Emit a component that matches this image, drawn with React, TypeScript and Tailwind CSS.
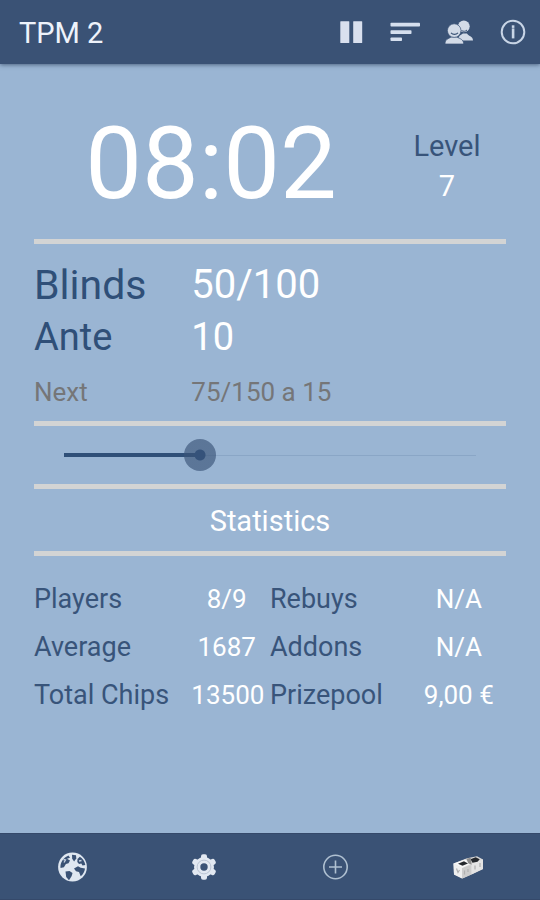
import { type ReactNode, useState } from "react";

type StatRow = {
  label: string;
  value: string;
  secondLabel: string;
  secondValue: string;
};

const stats: StatRow[] = [
  { label: "Players", value: "8/9", secondLabel: "Rebuys", secondValue: "N/A" },
  { label: "Average", value: "1687", secondLabel: "Addons", secondValue: "N/A" },
  { label: "Total Chips", value: "13500", secondLabel: "Prizepool", secondValue: "9,00 €" },
];

const gearAngles = [0, 60, 120, 180, 240, 300];

function PauseIcon() {
  return (
    <svg viewBox="0 0 32 32" className="h-8 w-8" fill="#d9e0ee">
      <rect x="5.3" y="5.3" width="9" height="21.6" rx="0.5" />
      <rect x="18.2" y="5.3" width="9" height="21.6" rx="0.5" />
    </svg>
  );
}

function SortIcon() {
  return (
    <svg viewBox="0 0 32 32" className="h-8 w-8" fill="#d5dfee">
      <rect x="1.5" y="6.8" width="29.5" height="3.8" rx="0.8" />
      <rect x="1.5" y="14.2" width="21" height="3.8" rx="0.8" />
      <rect x="1.5" y="21.5" width="11.5" height="3.6" rx="0.8" />
    </svg>
  );
}

function PlayersIcon() {
  return (
    <svg viewBox="0 0 32 32" className="h-8 w-8" fill="#d3dbe7">
      <circle cx="20.8" cy="10.3" r="5.9" />
      <path d="M15 24.6c0-4 2.500-5.500 5-7h4c1 2.500 6 2.500 6 7z" />
      <g stroke="#3a5275" strokeWidth="0.7">
        <path d="M2 28c.2-4.800 3-5.300 6.500-7h5c3.500 1.700 7 2.200 7.200 7z" />
        <circle cx="11.200" cy="14.600" r="6.800" />
      </g>
      <path d="M8 16.800c1.800 2 5 2 7 0" fill="none" stroke="#3a5275" strokeWidth="1.200" />
      <path d="M18.500 14.500c1.800 1.200 4 1 5.500-.5" fill="none" stroke="#3a5275" strokeWidth="1" />
    </svg>
  );
}

function InfoIcon() {
  return (
    <svg viewBox="0 0 32 32" className="h-8 w-8">
      <circle cx="16" cy="16" r="11.300" fill="none" stroke="#c8d5e6" strokeWidth="2" />
      <rect x="14.800" y="9.300" width="2.600" height="2.600" fill="#c8d5e6" />
      <rect x="14.800" y="12.400" width="2.600" height="10" fill="#c8d5e6" />
    </svg>
  );
}

function GlobeIcon() {
  return (
    <svg viewBox="0 0 32 32" className="h-8 w-8">
      <circle cx="16.500" cy="16" r="14.400" fill="#dfe7f1" />
      <g fill="#3a5275">
        <path d="M16 3.800l4 .5.300 3.200-2.200 3-1.900-2.800z" />
        <path d="M12.500 4.500l1.500 2.300-3 1 3 1.800-1.500 2.600-2.600.8-2 3.200-3.400.8c-.6-5.500 3-10.500 8-12.500z" />
        <path d="M21.500 8l2.300-2.200c3 1.800 5 4.600 5.500 8.200l-2.800.5-1.200-2-2.300.6-1.700-2z" />
        <path d="M9.500 20.500l4-.5 3 2-.8 3-2.700 4.300-2.800-3.300z" />
        <path d="M18 17.500l4-2.300 2.700 1.500 4.300.7c-.4 3.200-1.800 5.800-4.300 7.900l-1.700-4.200-3-.8z" />
      </g>
      <path d="M7.500 8.500l2 .5-1.500 2.500M23 10l2.500-.5" fill="none" stroke="#c6d2e2" strokeWidth="1.300" />
    </svg>
  );
}

function GearIcon() {
  return (
    <svg viewBox="0 0 32 32" className="h-8 w-8">
      <g fill="#e2e8f1">
        {gearAngles.map((angle) => (
          <rect key={angle} x="13" y="3.200" width="6" height="7.500" rx="2" transform={`rotate(${angle} 16 16)`} />
        ))}
        <circle cx="16" cy="16" r="10" />
      </g>
      <circle cx="16" cy="16" r="6.900" fill="none" stroke="#b5bfcf" strokeWidth="0.900" />
      <circle cx="16" cy="16" r="3.700" fill="#3a5275" />
    </svg>
  );
}

function AddIcon() {
  return (
    <svg viewBox="0 0 32 32" className="h-8 w-8" fill="none" stroke="#afc0d1">
      <circle cx="15.500" cy="16" r="11.700" strokeWidth="1.600" />
      <path d="M15.500 9.500v13M9 16h13" strokeWidth="1.600" />
    </svg>
  );
}

function ChipsIcon() {
  return (
    <svg viewBox="0 0 32 32" className="h-8 w-8">
      <path d="M1.500 12.500L15 7.300 25 5.300 31 8.500v9.500L16 25 10.500 27.500 2 23.500z" fill="#d9d9d9" />
      <path d="M1.500 12.500L10 17V27.500l-8-4z" fill="#efefef" />
      <path d="M10 17l9.500-3v9.500L10 27.500z" fill="#cdcdcd" />
      <path d="M19.500 12.500L31 8.500V18l-11.500 5.500z" fill="#e4e4e4" />
      <path d="M1.500 12.500L13 8.500l6.500 4L10 17z" fill="#f7f7f7" />
      <path d="M6 12.700l6-2.400 4 2.200-5.500 2.300z" fill="#25282d" />
      <path d="M18.500 8.200l5.200-2 4 2-2.200 2.500-5 1z" fill="#25282d" />
      <path d="M14.500 7.800l4.200-1 1 7-3.500-1.500z" fill="#8c8c8c" />
      <path d="M4.500 17.500l1.500 4 1.500-2.500M12.500 19.500v4M16 18v3M23 14.500v4M28 12v4" fill="none" stroke="#b0b0b0" strokeWidth="1.200" />
    </svg>
  );
}

function IconButton({ label, className = "", children }: { label: string; className?: string; children: ReactNode }) {
  return (
    <button type="button" aria-label={label} className={`flex items-center justify-center ${className}`}>
      {children}
    </button>
  );
}

function Divider() {
  return <hr className="h-[5px] border-0 bg-[#d3d4d4]" />;
}

export default function App() {
  const [progress, setProgress] = useState(33);

  return (
    <div
      className="flex min-h-screen flex-col bg-[#9ab5d3] text-white"
      style={{ fontFamily: "Roboto, sans-serif" }}
    >
      <header className="flex h-16 items-center bg-[#3a5275] pl-[19px] shadow-[0_1px_4px_rgba(30,50,80,0.6)]">
        <h1 className="flex-1 pt-1 text-[29px] text-[#eef3fb]">TPM 2</h1>
        <IconButton label="Pause" className="w-[54px]">
          <PauseIcon />
        </IconButton>
        <IconButton label="Levels" className="w-[54px]">
          <SortIcon />
        </IconButton>
        <IconButton label="Players" className="w-[54px]">
          <PlayersIcon />
        </IconButton>
        <IconButton label="Info" className="w-[54px]">
          <InfoIcon />
        </IconButton>
      </header>

      <main className="flex-1 px-[34px]">
        <section className="grid grid-cols-4 items-center pt-6">
          <div className="col-span-3 text-center text-[101px] leading-[151px]">08:02</div>
          <div className="pt-1 text-center text-[29px] leading-10">
            <div className="text-[#38547a]">Level</div>
            <div>7</div>
          </div>
        </section>
        <Divider />

        <dl className="grid grid-cols-3 pt-[15px] text-[41px] leading-[52px]">
          <dt className="text-[#2f4f78]">Blinds</dt>
          <dd className="col-span-2 text-[40px]">50/100</dd>
          <dt className="text-[38px] text-[#2f4f78]">Ante</dt>
          <dd className="col-span-2 text-[38px]">10</dd>
          <dt className="text-[26px] leading-[58px] text-[#757678]">Next</dt>
          <dd className="col-span-2 text-[26px] leading-[58px] text-[#757678]">75/150 a 15</dd>
        </dl>
        <Divider />

        <div className="relative mx-[14px] flex h-[58px] items-center">
          <div className="absolute inset-x-4 flex h-1 items-center">
            <div className="h-full bg-[#2f4f78]" style={{ width: `${progress}%` }} />
            <div className="h-px flex-1 bg-[#8aa6c6]" />
          </div>
          <input
            type="range"
            min={0}
            max={100}
            value={progress}
            aria-label="Level time"
            onChange={(event) => setProgress(Number(event.target.value))}
            className="relative h-8 w-full appearance-none bg-transparent [&::-webkit-slider-thumb]:h-8 [&::-webkit-slider-thumb]:w-8 [&::-webkit-slider-thumb]:appearance-none [&::-webkit-slider-thumb]:rounded-full [&::-webkit-slider-thumb]:bg-[radial-gradient(circle,#35527a_5px,rgba(58,84,120,0.65)_6px)]"
          />
        </div>
        <Divider />

        <h2 className="pt-0.5 text-center text-[29px] leading-[60px]">Statistics</h2>
        <Divider />

        <table className="mt-[19px] w-full table-fixed text-[26px] leading-[48px]">
          <colgroup>
            <col className="w-1/3" />
            <col className="w-1/6" />
            <col className="w-[30%]" />
            <col className="w-[20%]" />
          </colgroup>
          <tbody>
            {stats.map((row) => (
              <tr key={row.label} className="whitespace-nowrap">
                <th scope="row" className="p-0 text-left text-[27px] font-normal text-[#38547a]">
                  {row.label}
                </th>
                <td className="py-0 pr-2 pl-0 text-center">{row.value}</td>
                <th scope="row" className="p-0 text-left text-[27px] font-normal text-[#38547a]">
                  {row.secondLabel}
                </th>
                <td className="p-0 text-center">{row.secondValue}</td>
              </tr>
            ))}
          </tbody>
        </table>
      </main>

      <footer className="grid h-[67px] grid-cols-4 border-y border-[#35496a] bg-[#3a5275] px-[6px]">
        <IconButton label="Web">
          <GlobeIcon />
        </IconButton>
        <IconButton label="Settings">
          <GearIcon />
        </IconButton>
        <IconButton label="Add">
          <AddIcon />
        </IconButton>
        <IconButton label="Chips">
          <ChipsIcon />
        </IconButton>
      </footer>
    </div>
  );
}
